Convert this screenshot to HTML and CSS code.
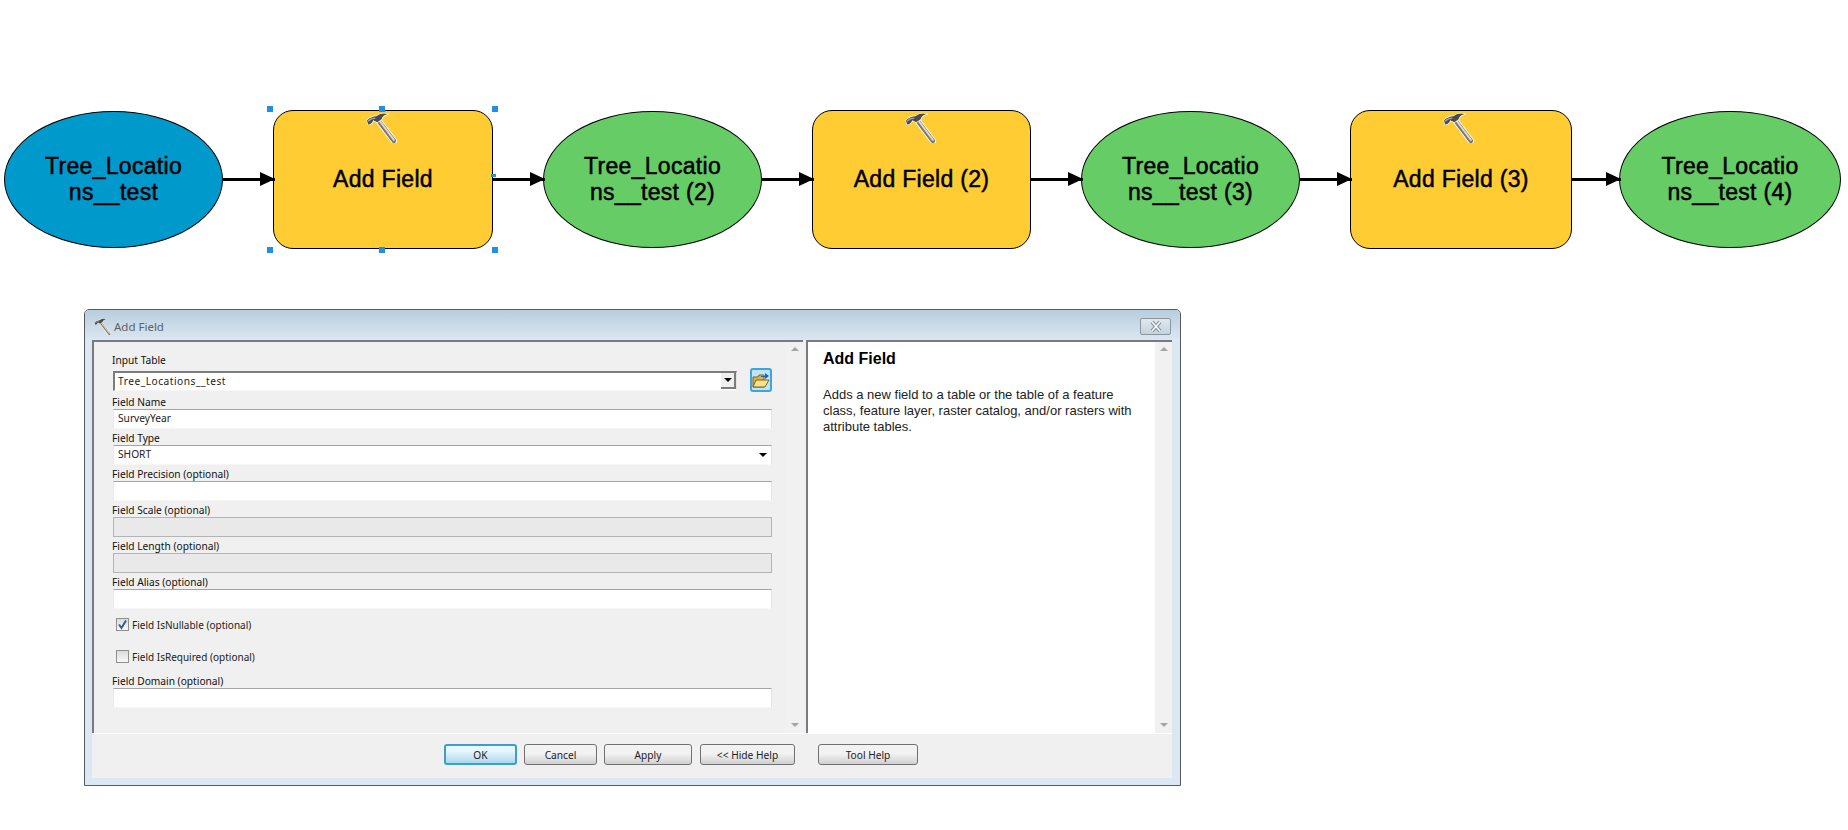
FILE: index.html
```html
<!DOCTYPE html>
<html lang="en">
<head>
  <meta charset="UTF-8">
  <title>Add Field</title>
  <link rel="stylesheet" href="styles.css">
</head>
<body>
  <svg class="defs" width="0" height="0">
    <symbol id="hammer" viewBox="0 0 30 30">
      <path d="M11 7 L27 28" stroke="#fff" stroke-width="6" stroke-linecap="round"/>
      <path d="M11 7 L27 28" stroke="#7d7566" stroke-width="4.2" stroke-linecap="round"/>
      <path d="M12 7 L27 27" stroke="#e2dccf" stroke-width="1.8" stroke-linecap="round"/>
      <path d="M1 8 C3 6 7 4 10 4 C14 1 18 1 21 2 C18 3 16 4 15 7 L11 10 L7 8 C6 11 4 12 2 12 Z" fill="#fff" stroke="#fff" stroke-width="1.2"/>
      <path d="M1 8 C3 6 7 4 10 4 C14 1 18 1 21 2 C18 3 16 4 15 7 L11 10 L7 8 C6 11 4 12 2 12 Z" fill="#4b4b4b"/>
      <path d="M2 9 C4 7 7 6 9 6" stroke="#a5a5a5" stroke-width="1.2" fill="none"/>
    </symbol>
  </svg>

  <div class="diagram">
    <div class="node ellipse blue">Tree_Locatio<br>ns__test</div>
    <div class="arrow"></div>
    <div class="node box selected">
      <svg class="node-icon"><use href="#hammer"/></svg>
      Add Field
      <i class="handle tl"></i><i class="handle tc"></i><i class="handle tr"></i>
      <i class="handle mr"></i>
      <i class="handle bl"></i><i class="handle bc"></i><i class="handle br"></i>
    </div>
    <div class="arrow"></div>
    <div class="node ellipse green">Tree_Locatio<br>ns__test (2)</div>
    <div class="arrow"></div>
    <div class="node box narrow">
      <svg class="node-icon"><use href="#hammer"/></svg>
      Add Field (2)
    </div>
    <div class="arrow"></div>
    <div class="node ellipse green">Tree_Locatio<br>ns__test (3)</div>
    <div class="arrow"></div>
    <div class="node box wide">
      <svg class="node-icon"><use href="#hammer"/></svg>
      Add Field (3)
    </div>
    <div class="arrow short"></div>
    <div class="node ellipse green last">Tree_Locatio<br>ns__test (4)</div>
  </div>

  <div class="dialog">
    <div class="titlebar">
      <svg class="title-icon"><use href="#hammer"/></svg>
      <span class="title-text">Add Field</span>
      <div class="close-btn">
        <svg width="12" height="11" viewBox="0 0 12 11">
          <path d="M2 1 L10 10 M10 1 L2 10" stroke="#7f8a94" stroke-width="3.6"/>
          <path d="M2 1 L10 10 M10 1 L2 10" stroke="#f4f7f9" stroke-width="1.8"/>
        </svg>
      </div>
    </div>

    <div class="dialog-body">
      <div class="panes">
        <div class="form-pane">
          <div class="form">
            <div class="field first">
              <label>Input Table</label>
              <div class="combo-row">
                <div class="input combo">Tree_Locations__test<span class="combo-btn"><b class="tri"></b></span></div>
                <div class="folder-btn">
                  <svg width="18" height="18" viewBox="0 0 18 18">
                    <path d="M1 6 H6 L7 4 H12 V16 H1 Z" fill="#d9b648" stroke="#7a6420"/>
                    <path d="M1 16 L4 9 H17 L13 16 Z" fill="#f7e08c" stroke="#7a6420"/>
                    <path d="M9 5 H13 V2 L17 5 L13 8 V6 H9 Z" fill="#2a5fb0"/>
                  </svg>
                </div>
              </div>
            </div>
            <div class="field">
              <label>Field Name</label>
              <div class="input">SurveyYear</div>
            </div>
            <div class="field">
              <label>Field Type</label>
              <div class="input select">SHORT<b class="tri"></b></div>
            </div>
            <div class="field">
              <label>Field Precision (optional)</label>
              <div class="input"></div>
            </div>
            <div class="field">
              <label>Field Scale (optional)</label>
              <div class="input disabled"></div>
            </div>
            <div class="field">
              <label>Field Length (optional)</label>
              <div class="input disabled"></div>
            </div>
            <div class="field">
              <label>Field Alias (optional)</label>
              <div class="input"></div>
            </div>
            <div class="check-row first-check">
              <span class="checkbox checked">
                <svg width="11" height="11" viewBox="0 0 11 11"><path d="M2 5.5 L4.5 9 L9 1.5" fill="none" stroke="#3b5a94" stroke-width="2"/></svg>
              </span>
              Field IsNullable (optional)
            </div>
            <div class="check-row">
              <span class="checkbox"></span>
              Field IsRequired (optional)
            </div>
            <div class="field domain">
              <label>Field Domain (optional)</label>
              <div class="input"></div>
            </div>
          </div>
          <div class="scrollbar"><b class="up"></b><b class="down"></b></div>
        </div>

        <div class="help-pane">
          <div class="help">
            <h2>Add Field</h2>
            <p>Adds a new field to a table or the table of a feature class, feature layer, raster catalog, and/or rasters with attribute tables.</p>
          </div>
          <div class="scrollbar"><b class="up"></b><b class="down"></b></div>
        </div>
      </div>

      <div class="actions">
        <button class="btn ok">OK</button>
        <button class="btn cancel">Cancel</button>
        <button class="btn apply">Apply</button>
        <button class="btn hide">&lt;&lt; Hide Help</button>
        <button class="btn tool">Tool Help</button>
      </div>
    </div>
  </div>
</body>
</html>
```

FILE: styles.css
```css
body {
  margin: 0;
  background: #fff;
  font-family: "Liberation Sans", Arial, sans-serif;
  color: #000;
}
.defs {
  position: absolute;
}

/* model diagram */
.diagram {
  display: flex;
  align-items: center;
  padding: 110px 0 0 4px;
  height: 139px;
}
.node {
  position: relative;
  flex: none;
  display: flex;
  align-items: center;
  justify-content: center;
  box-sizing: border-box;
  width: 219px;
  padding-bottom: 2px;
  border: 1px solid #000;
  font-size: 23px;
  line-height: 26px;
  letter-spacing: 0.3px;
  text-align: center;
  -webkit-text-stroke: 0.5px #000;
}
.ellipse {
  height: 137px;
  border-radius: 50%;
}
.ellipse.last {
  width: 222px;
}
.blue {
  background: #0099cc;
}
.green {
  background: #66cc66;
}
.box {
  height: 139px;
  width: 220px;
  background: #ffcc33;
  border-radius: 20px;
}
.box.narrow {
  width: 219px;
}
.box.wide {
  width: 222px;
}
.node-icon {
  position: absolute;
  top: 1px;
  left: 92px;
  width: 31px;
  height: 31px;
}

/* connector: shaft with a triangle for the head */
.arrow {
  position: relative;
  z-index: 1;
  flex: none;
  width: 52px;
  height: 3px;
  margin-right: -2px;
  background: #000;
}
.arrow::after {
  content: "";
  position: absolute;
  right: 0;
  top: -6px;
  border-left: 15px solid #000;
  border-top: 7.5px solid transparent;
  border-bottom: 7.5px solid transparent;
}
.arrow.short {
  width: 49px;
}
.handle {
  position: absolute;
  z-index: 2;
  width: 6px;
  height: 6px;
  background: #1e90e8;
}
.tl { left: -7px; top: -5px; }
.tc { left: 105px; top: -5px; }
.tr { right: -6px; top: -5px; }
.mr { right: -4px; top: 63px; width: 5px; height: 3px; }
.bl { left: -7px; bottom: -5px; }
.bc { left: 105px; bottom: -5px; }
.br { right: -6px; bottom: -5px; }

/* dialog */
.dialog {
  box-sizing: border-box;
  width: 1097px;
  height: 477px;
  margin: 60px 0 0 84px;
  border: 1px solid #555b60;
  border-radius: 5px 5px 0 0;
  background: #dbe8f3;
  display: flex;
  flex-direction: column;
  font-family: "Noto Sans", "Liberation Sans", sans-serif;
}
.titlebar {
  display: flex;
  align-items: center;
  box-sizing: border-box;
  height: 30px;
  flex: none;
  padding: 2px 9px 0 9px;
  background: linear-gradient(#b8cddd, #dbe7f1);
  border-radius: 4px 4px 0 0;
}
.title-icon {
  width: 17px;
  height: 17px;
  margin-right: 3px;
}
.title-text {
  font-size: 11.5px;
  color: #5d6368;
}
.close-btn {
  margin-left: auto;
  width: 31px;
  height: 17px;
  box-sizing: border-box;
  border: 1px solid #8a959e;
  border-radius: 2px;
  background: linear-gradient(#dfe8ef, #c4d3df);
  display: flex;
  align-items: center;
  justify-content: center;
}
.dialog-body {
  flex: 1;
  margin: 0 8px 7px 7px;
  background: #f0f0f0;
  display: flex;
  flex-direction: column;
}
.panes {
  display: flex;
  box-sizing: border-box;
  height: 394px;
  flex: none;
  gap: 3px;
  border-bottom: 1px solid #fff;
}
.form-pane {
  display: flex;
  width: 711px;
  box-sizing: border-box;
  border-top: 2px solid #777b7f;
  border-left: 2px solid #777b7f;
}
.form {
  flex: 1;
  padding: 11px 14px 0 18px;
  font-size: 10.2px;
}
.scrollbar {
  width: 17px;
  flex: none;
  background: #f1f1f1;
  display: flex;
  flex-direction: column;
  justify-content: space-between;
  align-items: center;
  padding: 5px 0 6px;
  box-sizing: border-box;
}
.scrollbar b {
  width: 0;
  height: 0;
  border-left: 4px solid transparent;
  border-right: 4px solid transparent;
}
.scrollbar .up {
  border-bottom: 4px solid #a5a5a5;
}
.scrollbar .down {
  border-top: 4px solid #a5a5a5;
}
.field {
  margin-bottom: 2px;
}
.field.first {
  margin-bottom: 4px;
}
.field label {
  display: block;
  height: 14px;
  line-height: 14px;
  color: #111;
}
.field.first label {
  height: 18px;
}
.input {
  position: relative;
  box-sizing: border-box;
  height: 20px;
  margin-left: 1px;
  padding-left: 4px;
  line-height: 17px;
  background: #fff;
  border-top: 1px solid #a3a3a3;
  border-left: 1px solid #eaeaea;
  border-right: 1px solid #e4e4e4;
  border-bottom: 1px solid #f6f6f6;
  color: #222;
}
.input.disabled {
  background: #e9e9e9;
  border: 1px solid #b4b4b4;
}
.combo-row {
  display: flex;
  align-items: center;
  gap: 13px;
}
.combo {
  flex: 1;
  border-top: 2px solid #7c7c7c;
  border-left: 2px solid #7c7c7c;
  padding-left: 3px;
  line-height: 16px;
  letter-spacing: 0.5px;
}
.combo-btn {
  position: absolute;
  right: 0;
  top: 0;
  width: 15px;
  height: 16px;
  box-sizing: border-box;
  background: #efefef;
  border-right: 2px solid #7c7c7c;
  border-bottom: 2px solid #7c7c7c;
  display: flex;
  align-items: center;
  justify-content: center;
}
.tri {
  width: 0;
  height: 0;
  border-left: 4px solid transparent;
  border-right: 4px solid transparent;
  border-top: 4px solid #000;
}
.select .tri {
  position: absolute;
  right: 4px;
  top: 7px;
}
.folder-btn {
  flex: none;
  box-sizing: border-box;
  width: 22px;
  height: 24px;
  margin: -4px 0 -2px;
  border: 2px solid #3da5dc;
  border-radius: 3px;
  background: #bfe4f9;
  display: flex;
  align-items: center;
  justify-content: center;
}
.check-row {
  display: flex;
  align-items: center;
  gap: 3px;
  height: 13px;
  margin: 19px 0 0 4px;
  font-size: 10px;
  color: #222;
}
.check-row.first-check {
  margin-top: 9px;
}
.checkbox {
  box-sizing: border-box;
  width: 13px;
  height: 13px;
  border: 1px solid #8e8f8f;
  background: linear-gradient(#dcdcdc, #f8f8f8);
  display: flex;
  align-items: center;
  justify-content: center;
}
.domain {
  margin-top: 11px;
}
.help-pane {
  flex: 1;
  display: flex;
  background: #fff;
  border-top: 2px solid #777b7f;
  border-left: 2px solid #777b7f;
}
.help {
  flex: 1;
  padding: 8px 14px 0 15px;
  font-family: "Liberation Sans", Arial, sans-serif;
}
.help h2 {
  margin: 0;
  font-size: 16px;
  line-height: 18px;
}
.help p {
  margin: 19px 0 0;
  font-size: 13px;
  line-height: 16px;
  color: #222;
}
.actions {
  flex: 1;
  display: flex;
  align-items: flex-start;
  padding: 10px 0 0 352px;
  gap: 7px;
}
.btn {
  box-sizing: border-box;
  height: 21px;
  padding: 0;
  font: 10.2px "Noto Sans", "Liberation Sans", sans-serif;
  color: #222;
  border: 1px solid #707070;
  border-radius: 3px;
  background: linear-gradient(#f2f2f2 45%, #d0d0d0);
}
.btn.ok {
  width: 73px;
  border: 2px solid #3c9fc9;
  background: linear-gradient(#e8f6fd 30%, #a9d9ef);
}
.btn.cancel {
  width: 73px;
}
.btn.apply {
  width: 88px;
}
.btn.hide {
  width: 95px;
  margin-left: 1px;
}
.btn.tool {
  width: 100px;
  margin-left: 16px;
}
```
